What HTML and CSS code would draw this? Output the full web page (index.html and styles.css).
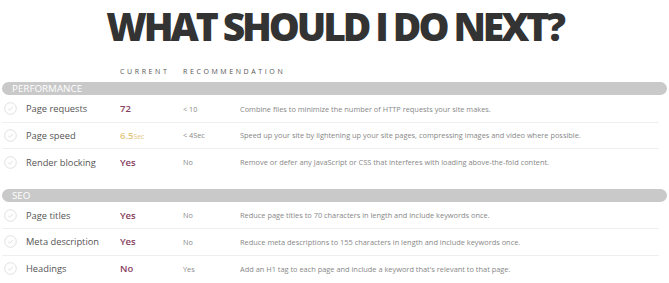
FILE: index.html
```html
<!DOCTYPE html>
<html>
<head>
<meta charset="utf-8">
<link rel="stylesheet" href="styles.css">
</head>
<body>
<div class="page">
  <h1 class="title">WHAT SHOULD I DO NEXT?</h1>
  <div class="colhead">
    <span class="c-cur">CURRENT</span>
    <span class="c-rec">RECOMMENDATION</span>
  </div>

  <div class="section">
    <div class="bar">PERFORMANCE</div>
    <div class="row">
      <span class="check"><svg width="13" height="13" viewBox="0 0 13 13"><circle cx="6.5" cy="6.5" r="5.8" fill="none" stroke="#e0e0e0" stroke-width="1"/><path d="M4.2 6.8 L5.8 8.2 L8.8 4.9" fill="none" stroke="#e0e0e0" stroke-width="1"/></svg></span>
      <span class="name">Page requests</span>
      <span class="cur bad">72</span>
      <span class="rec">&lt; 10</span>
      <span class="desc">Combine files to minimize the number of HTTP requests your site makes.</span>
    </div>
    <div class="row">
      <span class="check"><svg width="13" height="13" viewBox="0 0 13 13"><circle cx="6.5" cy="6.5" r="5.8" fill="none" stroke="#e0e0e0" stroke-width="1"/><path d="M4.2 6.8 L5.8 8.2 L8.8 4.9" fill="none" stroke="#e0e0e0" stroke-width="1"/></svg></span>
      <span class="name">Page speed</span>
      <span class="cur warn">6.5<small>Sec</small></span>
      <span class="rec">&lt; 4Sec</span>
      <span class="desc">Speed up your site by lightening up your site pages, compressing images and video where possible.</span>
    </div>
    <div class="row last">
      <span class="check"><svg width="13" height="13" viewBox="0 0 13 13"><circle cx="6.5" cy="6.5" r="5.8" fill="none" stroke="#e0e0e0" stroke-width="1"/><path d="M4.2 6.8 L5.8 8.2 L8.8 4.9" fill="none" stroke="#e0e0e0" stroke-width="1"/></svg></span>
      <span class="name">Render blocking</span>
      <span class="cur bad">Yes</span>
      <span class="rec">No</span>
      <span class="desc">Remove or defer any JavaScript or CSS that interferes with loading above-the-fold content.</span>
    </div>
  </div>

  <div class="section">
    <div class="bar">SEO</div>
    <div class="row">
      <span class="check"><svg width="13" height="13" viewBox="0 0 13 13"><circle cx="6.5" cy="6.5" r="5.8" fill="none" stroke="#e0e0e0" stroke-width="1"/><path d="M4.2 6.8 L5.8 8.2 L8.8 4.9" fill="none" stroke="#e0e0e0" stroke-width="1"/></svg></span>
      <span class="name">Page titles</span>
      <span class="cur bad">Yes</span>
      <span class="rec">No</span>
      <span class="desc">Reduce page titles to 70 characters in length and include keywords once.</span>
    </div>
    <div class="row">
      <span class="check"><svg width="13" height="13" viewBox="0 0 13 13"><circle cx="6.5" cy="6.5" r="5.8" fill="none" stroke="#e0e0e0" stroke-width="1"/><path d="M4.2 6.8 L5.8 8.2 L8.8 4.9" fill="none" stroke="#e0e0e0" stroke-width="1"/></svg></span>
      <span class="name">Meta description</span>
      <span class="cur bad">Yes</span>
      <span class="rec">No</span>
      <span class="desc">Reduce meta descriptions to 155 characters in length and include keywords once.</span>
    </div>
    <div class="row last">
      <span class="check"><svg width="13" height="13" viewBox="0 0 13 13"><circle cx="6.5" cy="6.5" r="5.8" fill="none" stroke="#e0e0e0" stroke-width="1"/><path d="M4.2 6.8 L5.8 8.2 L8.8 4.9" fill="none" stroke="#e0e0e0" stroke-width="1"/></svg></span>
      <span class="name">Headings</span>
      <span class="cur bad">No</span>
      <span class="rec">Yes</span>
      <span class="desc">Add an H1 tag to each page and include a keyword that's relevant to that page.</span>
    </div>
  </div>
</div>
</body>
</html>
```
FILE: styles.css
```css
* { box-sizing: border-box; }
html, body { margin: 0; padding: 0; background: #fff; }
body { font-family: "Open Sans", "Liberation Sans", sans-serif; color: #555; }
.page { width: 669px; padding: 0 2px; }
.title {
  margin: 0;
  padding-top: 4px;
  height: 60px;
  text-align: center;
  font-size: 39px;
  font-weight: 800;
  letter-spacing: -3.1px;
  color: #333;
  line-height: 44px;
}
.colhead {
  display: flex;
  height: 22px;
  align-items: center;
  font-size: 7px;
  letter-spacing: 2.6px;
  color: #555;
  padding-left: 118px;
}
.c-cur { width: 63px; }
.section + .section { margin-top: 13px; }
.bar {
  height: 13px;
  background: #c9c9c9;
  border-radius: 7px;
  color: #fff;
  font-size: 9.8px;
  line-height: 14px;
  padding-left: 10px;
  margin-bottom: 1px;
}
.row {
  display: flex;
  align-items: center;
  height: 26.5px;
  border-bottom: 1px solid #efefef;
  margin-right: 8px;
}
.row.last { border-bottom: none; }
.check { width: 24px; padding-left: 2px; display: flex; align-items: center; }
.name { width: 94px; font-size: 9.3px; color: #555; }
.cur { width: 63px; font-size: 9.5px; font-weight: 600; }
.cur small { font-size: 6.8px; font-weight: 400; }
.bad { color: #874160; }
.warn { color: #e3c67e; }
.rec { width: 57px; font-size: 7.3px; color: #8a8a8a; }
.desc { font-size: 7.4px; color: #888; }
```
